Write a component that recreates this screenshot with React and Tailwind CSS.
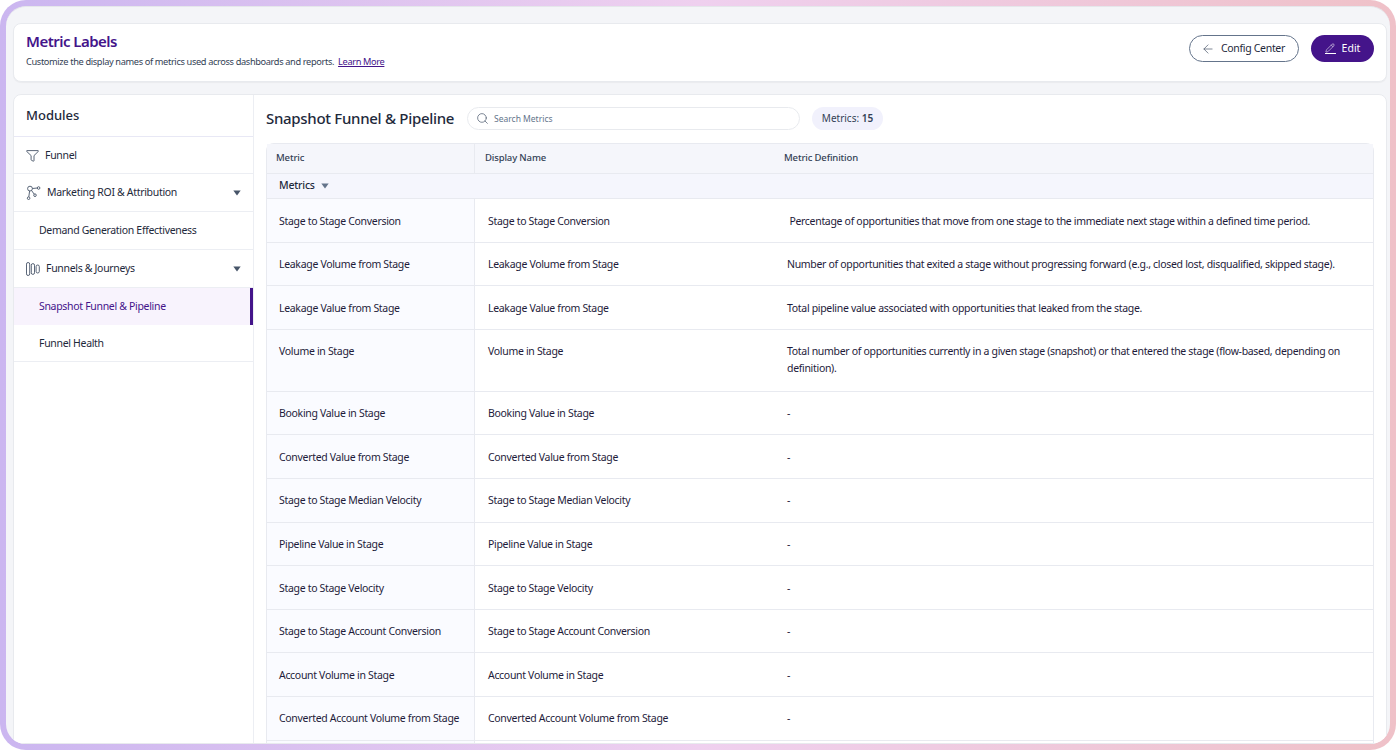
import React from "react";
import { ArrowLeft, Search, Pencil } from "lucide-react";

const rows = [
  ["Stage to Stage Conversion", "\u00a0Percentage of opportunities that move from one stage to the immediate next stage within a defined time period.", "h-[43.6px]"],
  ["Leakage Volume from Stage", "Number of opportunities that exited a stage without progressing forward (e.g., closed lost, disqualified, skipped stage).", "h-[43.6px]"],
  ["Leakage Value from Stage", "Total pipeline value associated with opportunities that leaked from the stage.", "h-[43.6px]"],
  ["Volume in Stage", "Total number of opportunities currently in a given stage (snapshot) or that entered the stage (flow-based, depending on definition).", "h-[62px]"],
  ["Booking Value in Stage", "-", "h-[43.6px]"],
  ["Converted Value from Stage", "-", "h-[43.6px]"],
  ["Stage to Stage Median Velocity", "-", "h-[43.6px]"],
  ["Pipeline Value in Stage", "-", "h-[43.6px]"],
  ["Stage to Stage Velocity", "-", "h-[43.6px]"],
  ["Stage to Stage Account Conversion", "-", "h-[43.6px]"],
  ["Account Volume in Stage", "-", "h-[43.6px]"],
  ["Converted Account Volume from Stage", "-", "h-[43.6px]"],
];

const Caret = ({ className = "" }) => (
  <svg viewBox="0 0 8 6" className={className}>
    <path d="M0.3 0.6h7.4L4 5.4z" fill="currentColor" />
  </svg>
);

const FunnelIcon = () => (
  <svg width="13" height="12" viewBox="0 0 13 12" fill="none" stroke="#475569" strokeWidth="0.9" strokeLinejoin="round" className="shrink-0">
    <path d="M1 0.6h11c.4 0 .6.4.3.8L8 5.6v5c0 .5-.4.7-.8.5L5.6 10.4c-.3-.1-.5-.4-.5-.7V5.6L.7 1.4C.4 1 .6.6 1 .6z" />
  </svg>
);

const RoiIcon = () => (
  <svg width="15" height="16" viewBox="0 0 15 16" fill="none" stroke="#475569" strokeWidth="0.9" className="shrink-0">
    <circle cx="4" cy="3.6" r="2.4" />
    <circle cx="12.6" cy="3" r="1.3" />
    <circle cx="2.6" cy="13.2" r="1.3" />
    <circle cx="9" cy="10.2" r="1.3" />
    <path d="M6.4 3.5 11.3 3M3.6 6 2.8 11.9M5.6 5.6 8.2 9.1" />
  </svg>
);

const BarsIcon = () => (
  <svg width="14" height="14" viewBox="0 0 14 14" fill="none" stroke="#475569" strokeWidth="0.9" className="shrink-0">
    <rect x="0.5" y="0.5" width="3.2" height="13" rx="1.6" />
    <rect x="5.3" y="1.6" width="3.2" height="10.8" rx="1.6" />
    <rect x="10.1" y="3" width="3.2" height="8" rx="1.6" />
  </svg>
);

const NavRow = ({ h, children, className = "" }) => (
  <div className={`flex items-center border-b border-[#eceef3] pt-[1px] text-[10.5px] tracking-[-0.03em] text-[#1e293b] ${h} ${className}`}>{children}</div>
);

export default function App() {
  return (
    <div className="h-[750px] w-[1396px] overflow-hidden bg-white" style={{ fontFamily: "'Noto Sans', sans-serif" }}>
      <div className="h-full w-full rounded-[26px] bg-gradient-to-r from-[#cbb6f0] via-[#efd0ef] to-[#efc1c8] p-[6px]">
        <div className="flex h-full flex-col gap-[12px] overflow-hidden rounded-[20px] border-t border-[#e5e7eb] bg-[#f4f5f8] pl-[7px] pr-[3px] pt-[16px]">
          <header className="flex h-[59px] shrink-0 items-start justify-between rounded-lg border border-[#e8eaee] bg-white px-[12px] shadow-[0_1px_1px_rgba(0,0,0,0.04)]">
            <div className="pt-[7px]">
              <h1 className="text-[15px] leading-[20px] font-semibold tracking-[-0.035em] text-[#44148a]">Metric Labels</h1>
              <p className="mt-[4px] text-[9.25px] leading-[14px] tracking-[-0.04em] text-[#334155]">
                Customize the display names of metrics used across dashboards and reports.
                <a className="ml-[4px] text-[#44148a] underline">Learn More</a>
              </p>
            </div>
            <div className="flex items-center gap-[12px] pt-[11px]">
              <button className="flex h-[27px] w-[110px] items-center justify-start gap-[6px] rounded-full border border-[#64748b] bg-white pl-[11px] text-[10.5px] tracking-[-0.03em] text-[#1e293b]">
                <ArrowLeft size={14} strokeWidth={1.2} className="text-[#475569]" />
                Config Center
              </button>
              <button className="flex h-[27px] w-[63px] items-center justify-center gap-[6px] rounded-full bg-[#44148a] text-[10.5px] text-white">
                <span className="flex flex-col items-center">
                  <Pencil size={10} strokeWidth={1.3} />
                  <span className="block h-px w-[11px] bg-white" />
                </span>
                Edit
              </button>
            </div>
          </header>

          <main className="flex min-h-0 flex-1 rounded-t-lg border border-[#e8eaee] bg-white">
            <aside className="w-[240px] shrink-0 border-r border-[#eceef3]">
              <div className="flex h-[42px] items-center border-b border-[#e8e8f5] pl-[12px] text-[13px] font-medium text-[#1e293b]">Modules</div>
              <NavRow h="h-[37px]" className="gap-[6px] pl-[12px]">
                <FunnelIcon />
                Funnel
              </NavRow>
              <NavRow h="h-[38px]" className="gap-[6px] pl-[12px] pr-[12px]">
                <RoiIcon />
                <span className="flex-1">Marketing ROI &amp; Attribution</span>
                <Caret className="h-[6px] w-[8px] text-[#475569]" />
              </NavRow>
              <NavRow h="h-[38px]" className="pl-[25px]">Demand Generation Effectiveness</NavRow>
              <NavRow h="h-[38px]" className="gap-[6px] pl-[12px] pr-[12px]">
                <BarsIcon />
                <span className="flex-1">Funnels &amp; Journeys</span>
                <Caret className="h-[6px] w-[8px] text-[#475569]" />
              </NavRow>
              <div className="flex h-[37px] items-center border-r-[3px] border-[#44148a] bg-[#f8f3fd] pl-[25px] text-[10.5px] tracking-[-0.03em] text-[#44148a]">Snapshot Funnel &amp; Pipeline</div>
              <NavRow h="h-[37px]" className="pl-[25px]">Funnel Health</NavRow>
            </aside>

            <section className="min-w-0 flex-1 overflow-hidden px-[12px]">
              <div className="flex h-[48px] items-center pb-[1px]">
                <h2 className="w-[201px] shrink-0 text-[15px] font-medium tracking-[-0.02em] whitespace-nowrap text-[#1e293b]">Snapshot Funnel &amp; Pipeline</h2>
                <div className="flex h-[23px] w-[333px] items-center gap-[5px] rounded-full border border-[#e8eaee] pl-[8px]">
                  <Search size={13} strokeWidth={1.3} className="text-[#475569]" />
                  <span className="pt-[1px] text-[8.5px] text-[#64748b]">Search Metrics</span>
                </div>
                <div className="ml-[12px] flex h-[23px] w-[71px] items-center justify-center rounded-full bg-[#f1f1fc] text-[10px] text-[#334155]">
                  Metrics:&nbsp;<span className="font-semibold">15</span>
                </div>
              </div>

              <div className="rounded-t-lg border border-b-0 border-[#e8eaf0]">
                <div className="flex h-[30px] items-center border-b border-[#e8eaf0] bg-[#f5f6fb] text-[9.5px] font-medium tracking-[-0.015em] text-[#334155]">
                  <div className="flex h-full w-[208px] shrink-0 items-center border-r border-[#e8eaf0] pl-[9px]">Metric</div>
                  <div className="w-[299px] shrink-0 pl-[10px]">Display Name</div>
                  <div className="pl-[10px]">Metric Definition</div>
                </div>
                <div className="flex h-[25px] items-center gap-[6px] border-b border-[#e8eaf0] bg-[#f5f6fd] pl-[12px] text-[10.5px] font-medium tracking-[-0.02em] text-[#1e293b]">
                  Metrics
                  <Caret className="h-[6px] w-[8px] text-[#64748b]" />
                </div>
                {rows.map(([name, def, h]) => (
                  <div key={name} className={`flex border-b border-[#e8eaf0] text-[10.5px] leading-[17px] tracking-[-0.03em] text-[#1e1b3a] ${h}`}>
                    <div className="w-[208px] shrink-0 border-r border-[#e8eaf0] bg-[#fafbff] pl-[12px] pt-[13.5px] whitespace-nowrap">{name}</div>
                    <div className="w-[312px] shrink-0 pl-[13px] pt-[13.5px] whitespace-nowrap">{name}</div>
                    <div className="min-w-0 flex-1 pr-[16px] pt-[13.5px]">{def}</div>
                  </div>
                ))}
                <div className="flex h-[44px]">
                  <div className="w-[208px] shrink-0 border-r border-[#e8eaf0] bg-[#fafbff]" />
                </div>
              </div>
            </section>
          </main>
        </div>
      </div>
    </div>
  );
}
